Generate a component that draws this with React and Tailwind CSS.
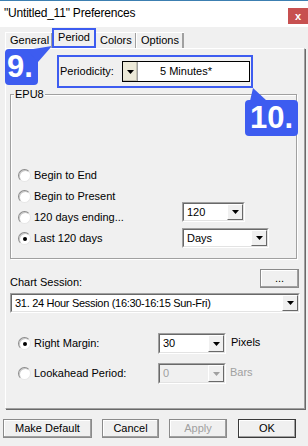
import React from "react";

const BLUE = "#3d5cf0";

const Arrow = ({ disabled }) => (
  <svg width="7" height="4" viewBox="0 0 7 4">
    <path d="M0 0h7L3.5 4z" fill={disabled ? "#a0a0a0" : "#000"} />
  </svg>
);

const Radio = ({ checked }) => (
  <span className="relative w-[13px] h-[13px] rounded-full bg-white border border-t-[#8a8a8a] border-l-[#8a8a8a] border-b-[#e6e6e6] border-r-[#e6e6e6] shadow-[inset_1px_1px_0_#c8c8c8] flex items-center justify-center shrink-0">
    {checked && <span className="w-[4px] h-[4px] rounded-full bg-black" />}
  </span>
);

// classic sunken combo box with arrow button on the right
const Combo = ({ value, className, disabled }) => (
  <div className={`border border-t-[#a0a0a0] border-l-[#a0a0a0] border-b-white border-r-white ${className}`}>
    <div
      className={`h-full flex border border-t-[#696969] border-l-[#696969] border-b-[#e3e3e3] border-r-[#e3e3e3] ${
        disabled ? "bg-[#f0f0f0]" : "bg-white"
      }`}
    >
      <span className={`flex-1 flex items-center pl-[3px] whitespace-nowrap ${disabled ? "text-[#a0a0a0]" : "text-black"}`}>{value}</span>
      <span className="w-[16px] bg-[#f0f0f0] flex items-center justify-center border border-t-white border-l-white border-b-[#696969] border-r-[#696969]">
        <Arrow disabled={disabled} />
      </span>
    </div>
  </div>
);

const Button = ({ children, className, disabled, isDefault }) => (
  <button
    className={`h-[19px] bg-[#f0f0f0] border ${isDefault ? "border-[#3a3a3a]" : "border-[#8a8a8a]"} shadow-[inset_-1px_-1px_0_#a0a0a0,inset_1px_1px_0_#fff] flex items-center justify-center ${
      disabled ? "text-[#a0a0a0]" : "text-black"
    } ${className}`}
  >
    {children}
  </button>
);

const RadioRow = ({ checked, label }) => (
  <div className="h-[21px] flex items-center gap-[3px]">
    <Radio checked={checked} />
    <span>{label}</span>
  </div>
);

export default function App() {
  return (
    <div className="relative w-[308px] h-[446px] overflow-hidden bg-[#f0f0f0] text-[11px] leading-[13px] text-black font-['Liberation_Sans',Arial,sans-serif]">
      {/* title bar */}
      <div className="h-[27px] bg-white border-t border-[#3c7fb1] flex items-start justify-between">
        <span className="pl-[4px] pt-[5px] text-[12px] leading-[15px] tracking-[-0.2px]">"Untitled_11" Preferences</span>
        <span className="mt-[7px] w-[20px] h-[16px] bg-[#c75050] text-white flex items-center justify-center text-[11px] font-bold leading-none">x</span>
      </div>

      {/* tabs */}
      <div className="h-[21px] pl-[5px] flex items-end relative z-10">
        <div className="w-[47px] h-[16px] border-t border-l border-white shadow-[inset_-1px_0_0_#a0a0a0] flex items-center pl-[4px]">General</div>
        <div className="w-[44px] h-[20px] border-2 border-[#3d5cf0] bg-[#f0f0f0] flex items-center justify-center pb-[1px]">Period</div>
        <div className="w-[40px] h-[16px] border-t border-white shadow-[inset_-1px_0_0_#a0a0a0] flex items-center pl-[4px]">Colors</div>
        <div className="w-[48px] h-[16px] border-t border-l border-white shadow-[inset_-2px_0_0_#a0a0a0] flex items-center pl-[4px]">Options</div>
      </div>

      {/* tab panel */}
      <div className="ml-[5px] w-[300px] h-[361px] border border-t-white border-l-white border-b-[#a0a0a0] border-r-[#a0a0a0] shadow-[1px_1px_0_#696969]">
        {/* periodicity */}
        <div className="mt-[6px] ml-[51px] w-[196px] h-[33px] border-2 border-[#3d5cf0] flex items-center justify-between pl-[1px] pr-[1px]">
          <span>Periodicity:</span>
          <div className="w-[128px] h-[21px] border border-black flex">
            <span className="w-[15px] bg-[#ece9d8] flex items-center justify-center border-r border-[#a0a0a0] shadow-[inset_-1px_-1px_0_#c5c2b2]">
              <Arrow />
            </span>
            <span className="flex-1 bg-white flex items-center pl-[22px]">5 Minutes*</span>
          </div>
        </div>

        {/* EPU8 group */}
        <div className="relative mt-[6px] ml-[4px] w-[287px] border border-[#a0a0a0] shadow-[inset_1px_1px_0_#fff,1px_1px_0_#fff] pt-[70px] pb-[9px] pl-[7px] flex items-end">
          <span className="absolute -top-[7px] left-[3px] px-[1px] bg-[#f0f0f0]">EPU8</span>
          <div className="w-[164px] flex flex-col">
            <RadioRow label="Begin to End" />
            <RadioRow label="Begin to Present" />
            <RadioRow label="120 days ending..." />
            <RadioRow label="Last 120 days" checked />
          </div>
          <div className="flex flex-col gap-[6px] mb-[1px]">
            <Combo value="120" className="w-[63px] h-[20px]" />
            <Combo value="Days" className="w-[87px] h-[20px]" />
          </div>
        </div>

        {/* chart session */}
        <div className="mt-[10px] ml-[4px] mr-[5px] flex items-end justify-between">
          <span className="mb-[-1px]">Chart Session:</span>
          <Button className="w-[39px]">...</Button>
        </div>
        <Combo value="31. 24 Hour Session (16:30-16:15 Sun-Fri)" className="mt-[5px] ml-[4px] w-[290px] h-[20px] tracking-[-0.3px]" />

        {/* margin */}
        <div className="mt-[20px] ml-[12px] flex items-center h-[21px]">
          <div className="w-[140px] flex items-center gap-[3px]">
            <Radio checked />
            <span>Right Margin:</span>
          </div>
          <Combo value="30" className="w-[68px] h-[21px]" />
          <span className="ml-[5px] -mt-[2px]">Pixels</span>
        </div>
        <div className="mt-[9px] ml-[12px] flex items-center h-[21px]">
          <div className="w-[140px] flex items-center gap-[3px]">
            <Radio />
            <span>Lookahead Period:</span>
          </div>
          <Combo value="0" className="w-[68px] h-[21px]" disabled />
          <span className="ml-[4px] -mt-[2px] text-[#a0a0a0]">Bars</span>
        </div>
      </div>

      {/* buttons */}
      <div className="mt-[10px] pl-[3px] flex">
        <Button className="w-[89px]">Make Default</Button>
        <Button className="ml-[10px] w-[57px]">Cancel</Button>
        <Button className="ml-[10px] w-[58px]" disabled>Apply</Button>
        <Button className="ml-[11px] w-[58px]" isDefault>OK</Button>
      </div>

      {/* callouts */}
      <svg className="absolute left-0 top-0" width="308" height="446" viewBox="0 0 308 446" style={{ pointerEvents: "none" }}>
        <rect x="5" y="49" width="33" height="36" rx="4" fill={BLUE} />
        <path d="M27 50 L52 46 L38 62 Z" fill={BLUE} />
        <rect x="245" y="100" width="53" height="36" rx="4" fill={BLUE} />
        <path d="M250 101 L253 88 L267 101 Z" fill={BLUE} />
      </svg>
      <span className="absolute left-[7px] top-[50px] text-white font-bold text-[31px] leading-[34px]">9.</span>
      <span className="absolute left-[250px] top-[101px] text-white font-bold text-[31px] leading-[34px]">10.</span>
    </div>
  );
}
